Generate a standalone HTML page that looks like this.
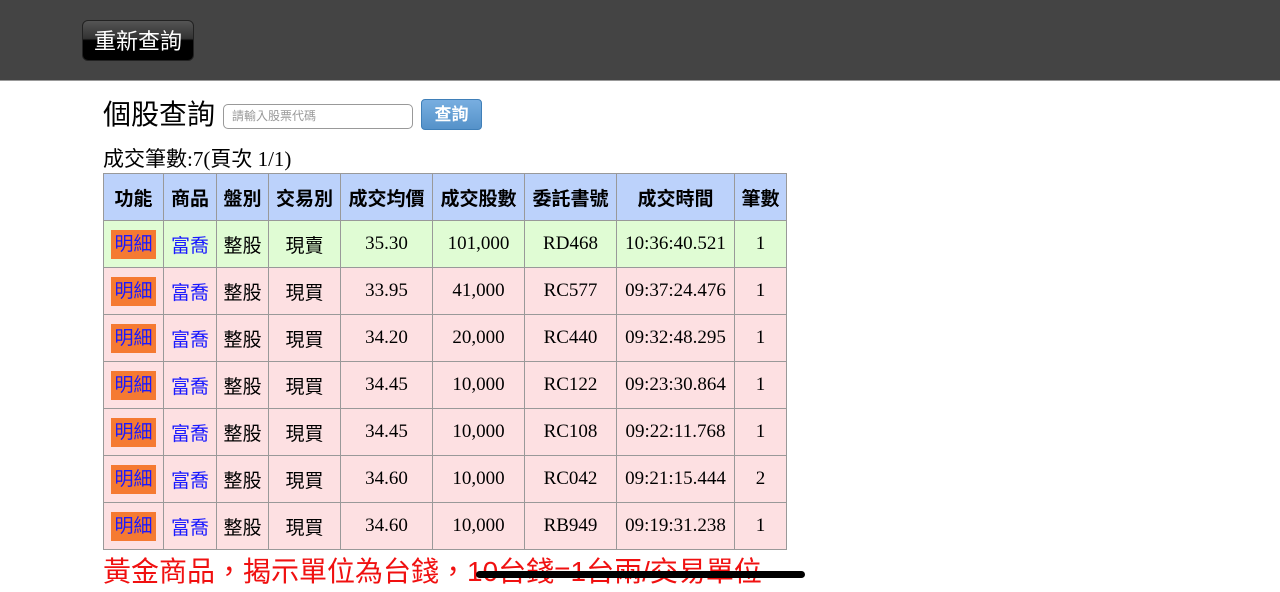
<!DOCTYPE html>
<html><head><meta charset="utf-8"><style>
body{margin:0;width:1280px;height:592px;overflow:hidden;background:#fff;font-family:"Liberation Sans","Noto Sans CJK TC",sans-serif;position:relative}
.top{position:absolute;left:0;top:0;width:1280px;height:80px;background:#444;border-bottom:1px solid #999}
.btn{position:absolute;left:82px;top:20px;width:112px;height:41px;border-radius:6px;background:linear-gradient(#555 0%,#333 45%,#000 50%,#000 100%);color:#fff;font-size:22px;line-height:41px;text-align:center;border:1px solid #222;box-sizing:border-box}
.h{position:absolute;left:103px;top:93px;font-size:28px;color:#000}
.inp{position:absolute;left:223px;top:104px;width:190px;height:25px;border:1px solid #999;border-radius:5px;box-sizing:border-box;font-size:12px;color:#999;padding-left:8px;line-height:23px}
.q{position:absolute;left:421px;top:99px;width:61px;height:31px;border-radius:4px;background:linear-gradient(#78aee0,#5592c9);border:1px solid #3f7fb8;box-sizing:border-box;color:#fff;font-size:17px;font-weight:bold;text-align:center;line-height:29px}
.cnt{position:absolute;left:103px;top:143px;font-size:21px;font-family:"Liberation Serif","Noto Sans CJK TC",serif}
table{position:absolute;left:103px;top:173px;border-collapse:collapse;font-size:19px}
td,th{border:1px solid #999;padding:0;text-align:center;height:47px;box-sizing:border-box}
th{background:#bcd2fb;font-weight:bold;height:47px}
tr.g td{background:#e0fcd4}
tr.p td{background:#fde0e2}
td.n{font-family:"Liberation Serif",serif;font-size:19px}
.d{display:inline-block;background:#f57a32;color:#1a1aff;padding:2px 3px;line-height:25px}
.b{color:#1a1aff}
.foot{position:absolute;left:103px;top:550px;color:#f01010;font-size:28px;letter-spacing:0}
.line{position:absolute;left:476px;top:571px;width:329px;height:7px;border-radius:4px;background:#000}
</style></head><body>
<div class="top"><div class="btn">重新查詢</div></div>
<div class="h">個股查詢</div>
<div class="inp">請輸入股票代碼</div>
<div class="q">查詢</div>
<div class="cnt">成交筆數:7(頁次 1/1)</div>
<table>
<tr><th style="width:60px">功能</th><th style="width:53px">商品</th><th style="width:52px">盤別</th><th style="width:72px">交易別</th><th style="width:92px">成交均價</th><th style="width:92px">成交股數</th><th style="width:92px">委託書號</th><th style="width:118px">成交時間</th><th style="width:52px">筆數</th></tr>
<tr class="g"><td><span class="d">明細</span></td><td class="b">富喬</td><td>整股</td><td>現賣</td><td class="n">35.30</td><td class="n">101,000</td><td class="n">RD468</td><td class="n">10:36:40.521</td><td class="n">1</td></tr>
<tr class="p"><td><span class="d">明細</span></td><td class="b">富喬</td><td>整股</td><td>現買</td><td class="n">33.95</td><td class="n">41,000</td><td class="n">RC577</td><td class="n">09:37:24.476</td><td class="n">1</td></tr>
<tr class="p"><td><span class="d">明細</span></td><td class="b">富喬</td><td>整股</td><td>現買</td><td class="n">34.20</td><td class="n">20,000</td><td class="n">RC440</td><td class="n">09:32:48.295</td><td class="n">1</td></tr>
<tr class="p"><td><span class="d">明細</span></td><td class="b">富喬</td><td>整股</td><td>現買</td><td class="n">34.45</td><td class="n">10,000</td><td class="n">RC122</td><td class="n">09:23:30.864</td><td class="n">1</td></tr>
<tr class="p"><td><span class="d">明細</span></td><td class="b">富喬</td><td>整股</td><td>現買</td><td class="n">34.45</td><td class="n">10,000</td><td class="n">RC108</td><td class="n">09:22:11.768</td><td class="n">1</td></tr>
<tr class="p"><td><span class="d">明細</span></td><td class="b">富喬</td><td>整股</td><td>現買</td><td class="n">34.60</td><td class="n">10,000</td><td class="n">RC042</td><td class="n">09:21:15.444</td><td class="n">2</td></tr>
<tr class="p"><td><span class="d">明細</span></td><td class="b">富喬</td><td>整股</td><td>現買</td><td class="n">34.60</td><td class="n">10,000</td><td class="n">RB949</td><td class="n">09:19:31.238</td><td class="n">1</td></tr>
</table>
<div class="foot">黃金商品，揭示單位為台錢，10台錢=1台兩/交易單位</div>
<div class="line"></div>
</body></html>
